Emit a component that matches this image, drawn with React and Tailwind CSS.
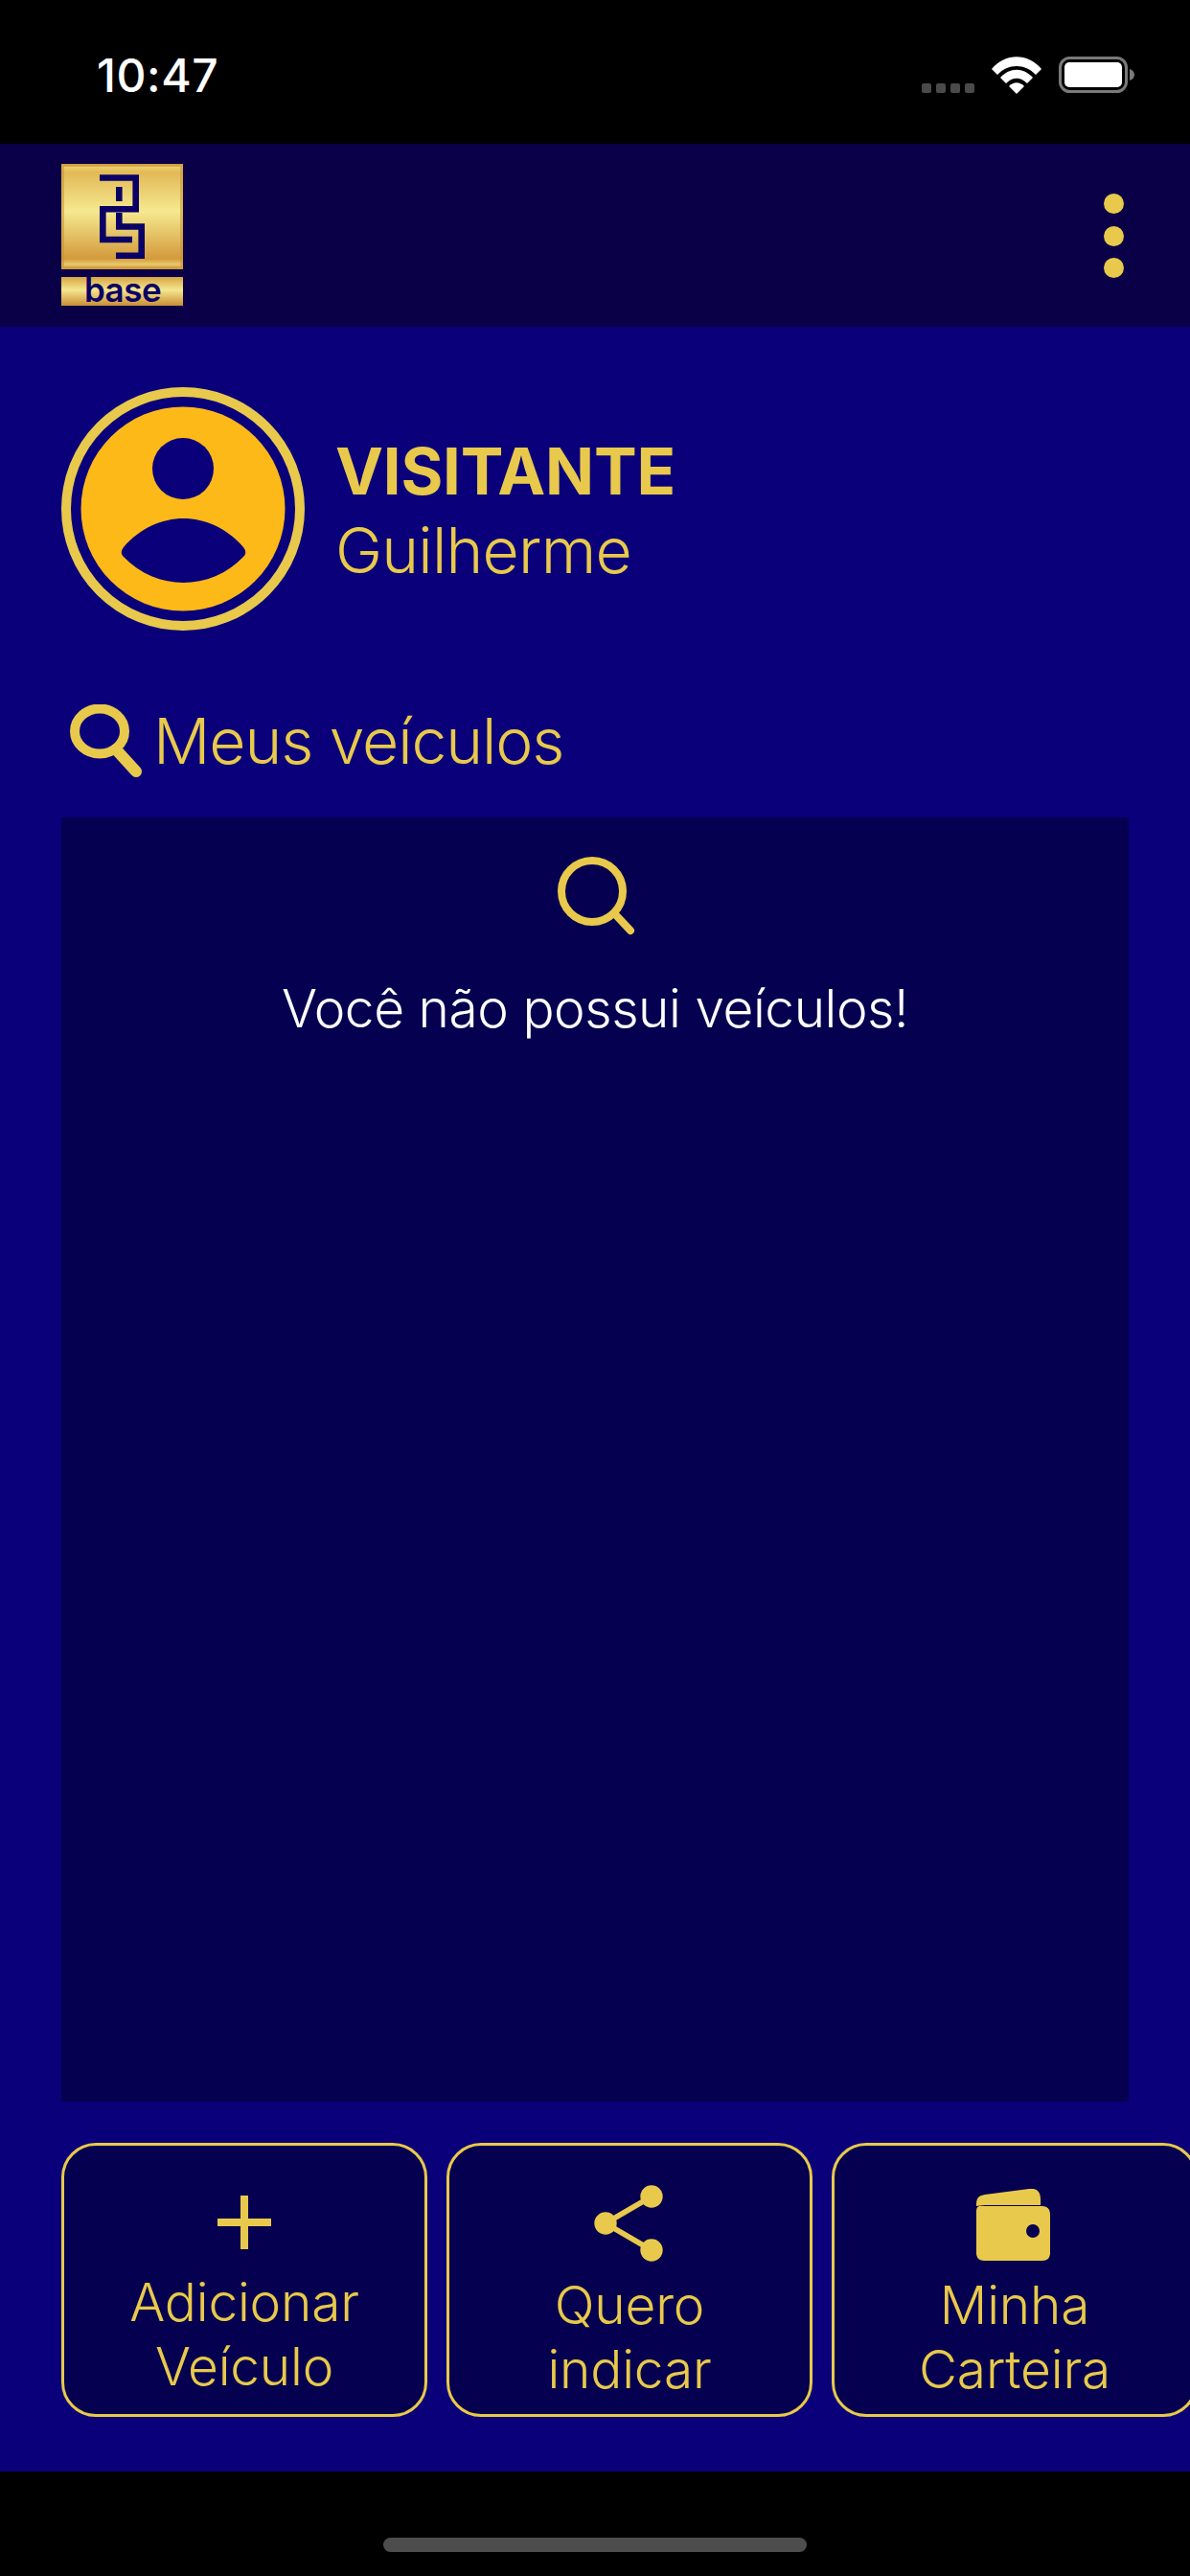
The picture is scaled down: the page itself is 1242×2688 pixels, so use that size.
import React from 'react';

const GOLD = '#e9c94b';

const StatusIcons = () => (
  <div className="flex items-start gap-[18px] pt-[59px] pr-[58px]">
    <div className="flex gap-[5px] pt-[28px]">
      <span className="w-[10px] h-[10px] rounded-[2px] bg-[#4a4a4a]" />
      <span className="w-[10px] h-[10px] rounded-[2px] bg-[#4a4a4a]" />
      <span className="w-[10px] h-[10px] rounded-[2px] bg-[#4a4a4a]" />
      <span className="w-[10px] h-[10px] rounded-[2px] bg-[#4a4a4a]" />
    </div>
    <svg width="52" height="39" viewBox="0 0 52 39" fill="#fff">
      <path d="M0 13 C14 -4 38 -4 52 13 L46 19 C35 7 17 7 6 19 Z" />
      <path d="M9 22 C19 11 33 11 43 22 L37 28 C30 21 22 21 15 28 Z" />
      <path d="M18 31 C23 26 29 26 34 31 L26 39 Z" />
    </svg>
    <svg width="79" height="38" viewBox="0 0 79 38">
      <rect x="1.5" y="1.5" width="69" height="35" rx="10" fill="none" stroke="#7a7a7a" strokeWidth="3" />
      <rect x="6" y="6" width="60" height="26" rx="5" fill="#fff" />
      <path d="M74 13 C77 14 79 16 79 19 C79 22 77 24 74 25 Z" fill="#7a7a7a" />
    </svg>
  </div>
);

const Logo = () => (
  <svg width="127" height="156" viewBox="4 6 127 156">
    <defs>
      <linearGradient id="goldSquare" x1="0" y1="0" x2="0" y2="1">
        <stop offset="0" stopColor="#d9a545" />
        <stop offset="0.03" stopColor="#ecd06e" />
        <stop offset="0.08" stopColor="#e2b956" />
        <stop offset="0.45" stopColor="#f5e98f" />
        <stop offset="0.9" stopColor="#d39a3c" />
        <stop offset="0.95" stopColor="#e8c868" />
        <stop offset="1" stopColor="#d9a545" />
      </linearGradient>
      <linearGradient id="goldBand" x1="0" y1="0" x2="0" y2="1">
        <stop offset="0" stopColor="#d6a544" />
        <stop offset="0.45" stopColor="#f5e68f" />
        <stop offset="1" stopColor="#c98f35" />
      </linearGradient>
    </defs>
    <rect x="4" y="6" width="127" height="110" fill="url(#goldSquare)" />
    <rect x="5.5" y="7.5" width="124" height="107" fill="none" stroke="#c98f35" strokeOpacity="0.55" strokeWidth="3" />
    <rect x="4" y="124" width="127" height="30" fill="url(#goldBand)" />
    <g fill="none" stroke="#0a0066" strokeWidth="6.6">
      <path d="M44 20.5 H81.7 V53.3 H47.3 V85 H78" />
      <path d="M64.3 30 V45" />
      <path d="M64.3 57 V71.5 H87.7 V101.7 H61" />
    </g>
    <text x="68" y="150" textAnchor="middle" fontFamily="Inter, sans-serif" fontWeight="600" fontSize="35" fill="#0a0066" letterSpacing="-0.5">base</text>
  </svg>
);

const Avatar = () => (
  <svg width="254" height="254" viewBox="0 0 254 254" className="shrink-0">
    <circle cx="127" cy="127" r="122" fill="none" stroke={GOLD} strokeWidth="10" />
    <circle cx="127" cy="127" r="106.5" fill="#fdb918" />
    <circle cx="127" cy="85" r="32" fill="#0a007a" />
    <path d="M65 167 C82 147 105 137 127.5 137 C150 137 173 147 190 167 C193 171 193 174 190 177 C173 195 150 204 127.5 204 C105 204 82 195 65 177 C62 174 62 171 65 167 Z" fill="#0a007a" />
  </svg>
);

const TitleSearchIcon = () => (
  <svg width="76" height="76" viewBox="0 0 76 76" className="shrink-0">
    <ellipse cx="31" cy="28" rx="26" ry="23.5" fill="none" stroke={GOLD} strokeWidth="10" />
    <path d="M48 47 L69 70" stroke={GOLD} strokeWidth="12" strokeLinecap="round" />
  </svg>
);

const PanelSearchIcon = () => (
  <svg width="84" height="84" viewBox="0 0 84 84">
    <circle cx="37" cy="37" r="32" fill="none" stroke={GOLD} strokeWidth="8" />
    <path d="M61 61 L77 78" stroke={GOLD} strokeWidth="8" strokeLinecap="round" />
  </svg>
);

const PlusIcon = () => (
  <svg width="56" height="56" viewBox="0 0 56 56">
    <path d="M28 0 V56 M0 28 H56" stroke={GOLD} strokeWidth="8" />
  </svg>
);

const ShareIcon = () => (
  <svg width="74" height="80" viewBox="0 0 74 80">
    <path d="M12 40 L60 12 M12 40 L60 68" stroke={GOLD} strokeWidth="5.5" />
    <circle cx="12" cy="40" r="11.7" fill={GOLD} />
    <circle cx="60" cy="12" r="11.7" fill={GOLD} />
    <circle cx="60" cy="68" r="11.7" fill={GOLD} />
  </svg>
);

const WalletIcon = () => (
  <svg width="77" height="75" viewBox="0 0 77 75">
    <path d="M0 16 C0 9 3 7 9 6 L55 0 C62 -1 67 2 67 11 V17 H7 L7 14 L60 10 V11 L0 18 Z" fill={GOLD} />
    <path d="M0 24 C0 20 1 18 4 18 H68 C74 18 77 21 77 27 V67 C77 72 74 75 69 75 H8 C3 75 0 72 0 67 Z" fill={GOLD} />
    <circle cx="59" cy="44" r="7" fill="#05004f" />
  </svg>
);

const ActionCard = ({ icon, iconBox, lines, textClass }) => (
  <div className="w-[382px] h-[286px] shrink-0 rounded-[36px] border-[3px] border-[#e9c94b] bg-[#05004f] flex flex-col items-center">
    <div className={iconBox}>{icon}</div>
    <div className={`text-center text-[55px] leading-[67px] font-[350] tracking-[-0.2px] text-[#e9c94b] ${textClass}`}>
      {lines.map((line) => (
        <div key={line}>{line}</div>
      ))}
    </div>
  </div>
);

const App = () => {
  return (
    <div className="relative w-[1242px] h-[2688px] overflow-hidden flex flex-col bg-[#0a007a] font-[Inter,sans-serif]">
      <div className="h-[150px] shrink-0 bg-black flex justify-between">
        <div className="pl-[101px] pt-[50px] text-[48px] leading-[58px] tracking-[0.6px] font-medium text-white">10:47</div>
        <StatusIcons />
      </div>

      <div className="h-[191px] shrink-0 bg-[#0a0048] flex justify-between pl-[64px] pr-[69px] pt-[21px]">
        <Logo />
        <div className="flex flex-col gap-[12.5px] pt-[31px]">
          <span className="w-[21px] h-[21px] rounded-full bg-[#e9c94b]" />
          <span className="w-[21px] h-[21px] rounded-full bg-[#e9c94b]" />
          <span className="w-[21px] h-[21px] rounded-full bg-[#e9c94b]" />
        </div>
      </div>

      <div className="flex-1 flex flex-col px-[64px] pt-[63px]">
        <div className="flex items-start gap-[32px]">
          <Avatar />
          <div className="pt-[46px] text-[#e9c94b]">
            <div className="text-[67px] leading-[83px] font-bold tracking-[-0.2px]">VISITANTE</div>
            <div className="text-[66px] leading-[83px] font-[350] tracking-[-0.8px]">Guilherme</div>
          </div>
        </div>

        <div className="h-[90px] mt-[70px] mb-[35px] pl-[9px] flex items-center gap-[11px] text-[#e9c94b]">
          <TitleSearchIcon />
          <span className="text-[66px] leading-[90px] font-[350] tracking-[-1.1px]">Meus veículos</span>
        </div>

        <div className="h-[1340px] w-[1114px] bg-[#05004f] flex flex-col items-center pt-[40px]">
          <div className="pl-[3px]">
            <PanelSearchIcon />
          </div>
          <div className="mt-[40px] text-[55px] leading-[70px] font-[350] tracking-[-0.45px] text-white">Você não possui veículos!</div>
        </div>

        <div className="mt-[43px] flex gap-[20px] w-[1200px]">
          <ActionCard icon={<PlusIcon />} iconBox="pt-[52px] h-[108px]" lines={['Adicionar', 'Veículo']} textClass="mt-[22px]" />
          <ActionCard icon={<ShareIcon />} iconBox="pt-[41px] h-[118px]" lines={['Quero', 'indicar']} textClass="mt-[15px]" />
          <ActionCard icon={<div className="mr-[3px]"><WalletIcon /></div>} iconBox="pt-[45px] h-[118px]" lines={['Minha', 'Carteira']} textClass="mt-[15px]" />
        </div>
      </div>

      <div className="h-[109px] shrink-0 bg-black flex justify-center pt-[69px]">
        <div className="w-[442px] h-[15px] rounded-full bg-[#4d4d4d]" />
      </div>
    </div>
  );
};

export default App;
